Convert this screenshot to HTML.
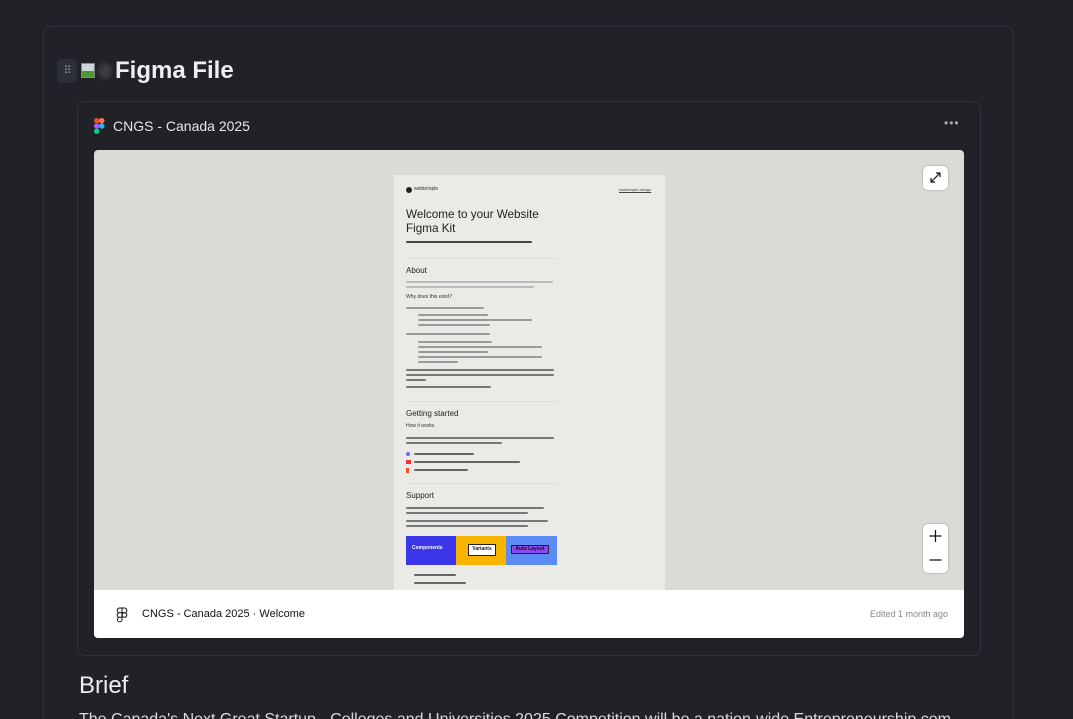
<!DOCTYPE html>
<html><head><meta charset="utf-8"><style>
*{margin:0;padding:0;box-sizing:border-box}
html,body{width:1073px;height:719px;overflow:hidden}
body{background:#202227;font-family:"Liberation Sans",sans-serif;position:relative;color:#e6e7ea}
.abs{position:absolute}
.dt{font-size:4px;color:#555;line-height:5px}
.bar{position:absolute;height:2px;background:#9a9a9a;border-radius:1px}
.bd{position:absolute;height:2px;background:#444;border-radius:1px}
</style></head><body>
<div class="abs" style="left:43px;top:26px;width:971px;height:720px;border:1px solid #2f3238;border-radius:8px"></div>
<div class="abs" style="left:57px;top:59px;width:20px;height:24px;background:#2c2f36;border-radius:4px;color:#8a8e96;font-size:11px;text-align:center;line-height:24px;letter-spacing:-1px">⠿</div>
<div class="abs" style="left:81px;top:63px;width:14px;height:15px;background:#cfd6de;border:1px solid #888"><div style="position:absolute;bottom:0;left:0;width:12px;height:6px;background:#4a9a2e"></div></div>
<div class="abs" style="left:98px;top:63px;width:14px;height:16px;background:#3a3c40;border-radius:50%;filter:blur(2px)"></div>
<div class="abs" style="left:115px;top:57px;font-size:24px;font-weight:bold;color:#eceef1">Figma File</div>
<div class="abs" style="left:77px;top:101px;width:904px;height:555px;border:1px solid #30333a;border-radius:8px"></div>
<svg class="abs" style="left:94px;top:118px" width="11" height="16" viewBox="0 0 11 16"><rect x="0" y="0" width="5.5" height="5.3" rx="2.6" fill="#f24e1e"/><rect x="5" y="0" width="5.5" height="5.3" rx="2.6" fill="#ff7262"/><rect x="0" y="5.3" width="5.5" height="5.3" rx="2.6" fill="#a259ff"/><circle cx="7.8" cy="8" r="2.7" fill="#1abcfe"/><rect x="0" y="10.6" width="5.5" height="5.3" rx="2.6" fill="#0acf83"/></svg>
<div class="abs" style="left:113px;top:118px;font-size:14px;color:#e4e6e9">CNGS - Canada 2025</div>
<div class="abs" style="left:944px;top:116px;font-size:12px;color:#aaa;letter-spacing:1px">•••</div>
<div class="abs" style="left:94px;top:150px;width:870px;height:488px;background:#dcdad6;border-radius:4px;overflow:hidden">
 <div class="abs" style="left:300px;top:25px;width:271px;height:420px;background:#eceae7">
  <div class="abs" style="left:12px;top:12px;width:6px;height:6px;border-radius:50%;background:#222"></div>
  <div class="abs dt" style="left:20px;top:12px;color:#333;font-size:5px">webtemple</div>
  <div class="abs dt" style="left:225px;top:12px;text-decoration:underline;color:#444">webtemple.design</div>
  <div class="abs" style="left:12px;top:33px;font-size:11.7px;line-height:14px;color:#222">Welcome to your Website<br>Figma Kit</div>
  <div class="bd" style="left:12px;top:66px;width:126px"></div>
  <div class="abs" style="left:12px;top:83px;width:151px;height:1px;background:#ddd"></div>
  <div class="abs" style="left:12px;top:91px;font-size:8px;color:#222">About</div>
  <div class="bar" style="left:12px;top:106px;width:147px;background:#bbb"></div>
  <div class="bar" style="left:12px;top:111px;width:128px;background:#bbb"></div>
  <div class="abs" style="left:12px;top:119px;font-size:5px;color:#333">Why does this exist?</div>
  <div class="bar" style="left:12px;top:132px;width:78px"></div>
  <div class="bar" style="left:24px;top:139px;width:70px"></div>
  <div class="bar" style="left:24px;top:144px;width:114px"></div>
  <div class="bar" style="left:24px;top:149px;width:72px"></div>
  <div class="bar" style="left:12px;top:158px;width:84px"></div>
  <div class="bar" style="left:24px;top:166px;width:74px"></div>
  <div class="bar" style="left:24px;top:171px;width:124px"></div>
  <div class="bar" style="left:24px;top:176px;width:70px"></div>
  <div class="bar" style="left:24px;top:181px;width:124px"></div>
  <div class="bar" style="left:24px;top:186px;width:40px"></div>
  <div class="bd" style="left:12px;top:194px;width:148px;background:#777"></div>
  <div class="bd" style="left:12px;top:199px;width:148px;background:#777"></div>
  <div class="bd" style="left:12px;top:204px;width:20px;background:#777"></div>
  <div class="bd" style="left:12px;top:211px;width:85px;background:#777"></div>
  <div class="abs" style="left:12px;top:226px;width:151px;height:1px;background:#ddd"></div>
  <div class="abs" style="left:12px;top:234px;font-size:8px;color:#222">Getting started</div>
  <div class="abs" style="left:12px;top:248px;font-size:5px;color:#333">How it works</div>
  <div class="bar" style="left:12px;top:262px;width:148px;background:#777"></div>
  <div class="bar" style="left:12px;top:267px;width:96px;background:#777"></div>
  <div class="abs" style="left:12px;top:277px;width:4px;height:4px;border-radius:50%;background:#6a6af0"></div>
  <div class="bar" style="left:20px;top:278px;width:60px;background:#666"></div>
  <div class="abs" style="left:12px;top:285px;width:5px;height:4px;background:#e33"></div>
  <div class="bar" style="left:20px;top:286px;width:106px;background:#666"></div>
  <div class="abs" style="left:12px;top:293px;width:3px;height:5px;background:#f24e1e"></div>
  <div class="bar" style="left:20px;top:294px;width:54px;background:#666"></div>
  <div class="abs" style="left:12px;top:308px;width:151px;height:1px;background:#ddd"></div>
  <div class="abs" style="left:12px;top:316px;font-size:8px;color:#222">Support</div>
  <div class="bar" style="left:12px;top:332px;width:138px;background:#777"></div>
  <div class="bar" style="left:12px;top:337px;width:122px;background:#777"></div>
  <div class="bar" style="left:12px;top:345px;width:142px;background:#777"></div>
  <div class="bar" style="left:12px;top:350px;width:122px;background:#777"></div>
  <div class="abs" style="left:12px;top:361px;width:50px;height:29px;background:#3b36e8"></div>
  <div class="abs" style="left:62px;top:361px;width:50px;height:29px;background:#f7b500"><div style="position:absolute;left:12px;top:8px;width:28px;height:12px;background:#fff;border:1px solid #222;font-size:5px;color:#222;text-align:center;font-weight:bold;line-height:8px">Variants</div></div>
  <div class="abs" style="left:112px;top:361px;width:51px;height:29px;background:#5b8cf6"><div style="position:absolute;left:5px;top:9px;width:38px;height:9px;background:#8a4af0;border:1px solid #222;font-size:5px;color:#111;text-align:center;font-weight:bold;line-height:7px">Auto Layout</div></div>
  <div class="abs" style="left:18px;top:370px;font-size:5px;color:#fff;font-weight:bold">Components</div>
  <div class="bar" style="left:20px;top:399px;width:42px;background:#666"></div>
  <div class="bar" style="left:20px;top:407px;width:52px;background:#666"></div>
 </div>
 <div class="abs" style="left:829px;top:16px;width:25px;height:24px;background:#fff;border-radius:5px;box-shadow:0 0 2px rgba(0,0,0,.3)"><svg width="25" height="24" viewBox="0 0 25 24"><path d="M8 16l9-9M13 7h4v4M8 12v4h4" fill="none" stroke="#111" stroke-width="1.2"/></svg></div>
 <div class="abs" style="left:829px;top:374px;width:25px;height:49px;background:#fff;border-radius:5px;box-shadow:0 0 2px rgba(0,0,0,.3)"><svg width="25" height="49" viewBox="0 0 25 49"><path d="M6.5 12h12M12.5 6v12M6.5 36h12" stroke="#111" stroke-width="1.2"/></svg></div>
 <div class="abs" style="left:0;top:440px;width:870px;height:48px;background:#fff">
  <svg class="abs" style="left:22px;top:17px" width="12" height="16" viewBox="0 0 12 16"><path d="M6 1H3.5a2.3 2.3 0 000 4.7H6zM6 1h2.5a2.3 2.3 0 010 4.7H6zM6 5.7H3.5a2.3 2.3 0 000 4.6H6zM8.5 5.7a2.3 2.3 0 110 4.6 2.3 2.3 0 010-4.6zM6 10.3H3.5a2.3 2.3 0 102.5 2.3z" fill="none" stroke="#111" stroke-width="1"/></svg>
  <div class="abs" style="left:48px;top:18px;font-size:11px;color:#111">CNGS - Canada 2025 · Welcome</div>
  <div class="abs" style="right:16px;top:19px;font-size:9px;color:#888">Edited 1 month ago</div>
 </div>
</div>
<div class="abs" style="left:79px;top:672px;font-size:24px;color:#eceef1">Brief</div>
<div class="abs" style="left:79px;top:711px;font-size:16px;color:#d8dade;white-space:nowrap">The Canada's Next Great Startup - Colleges and Universities 2025 Competition will be a nation-wide Entrepreneurship com</div>
</body></html>
